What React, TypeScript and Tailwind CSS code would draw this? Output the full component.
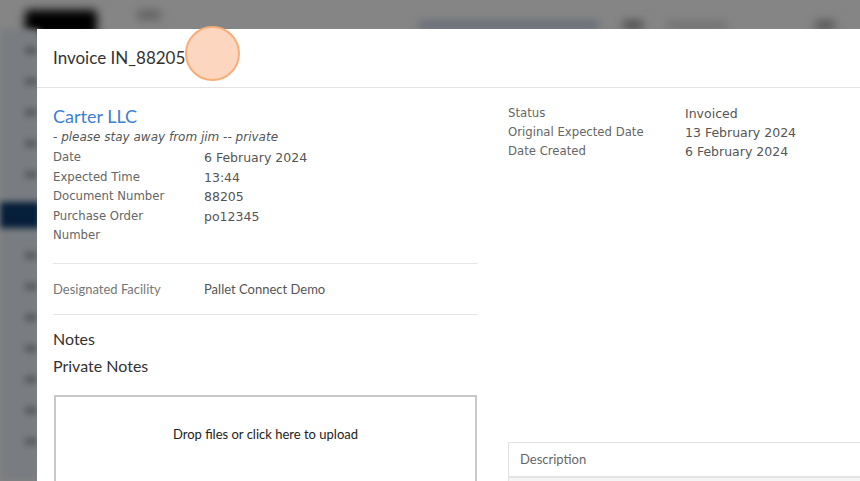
import React from "react";

const leftRows: [string, string][] = [
  ["Date", "6 February 2024"],
  ["Expected Time", "13:44"],
  ["Document Number", "88205"],
  ["Purchase Order Number", "po12345"],
];

const rightRows: [string, string][] = [
  ["Status", "Invoiced"],
  ["Original Expected Date", "13 February 2024"],
  ["Date Created", "6 February 2024"],
];

function Backdrop() {
  return (
    <div className="absolute inset-0 bg-white">
      <div className="flex h-[29px] items-center gap-10 bg-white px-[25px] blur-[5px]">
        <div className="h-[26px] w-[72px] translate-y-[8px] rounded bg-[#000]" />
        <div className="h-[10px] w-[24px] rounded bg-[#bbb]" />
        <div className="ml-auto flex items-center gap-6">
          <div className="h-[6px] w-[180px] translate-y-[10px] bg-[#a8b8d8]" />
          <div className="h-[8px] w-[20px] translate-y-[10px] bg-[#888]" />
          <div className="h-[6px] w-[60px] translate-y-[10px] bg-[#ccc]" />
          <div className="h-[8px] w-[40px] translate-y-[10px] bg-[#fff]" />
          <div className="h-[8px] w-[20px] translate-y-[10px] bg-[#999]" />
        </div>
      </div>
      <div className="flex h-[452px] w-[40px] flex-col gap-[24px] bg-[#e9eef6] pt-[18px] blur-[3px]">
        {[0, 1, 2, 3, 4, 5, 6, 7, 8, 9, 10, 11, 12].map((i) => (
          <div key={i} className={i === 5 ? "h-[26px] bg-[#0b3a6f]" : "ml-[25px] h-[7px] w-[12px] bg-[#a4a9b2]"} />
        ))}
      </div>
    </div>
  );
}

export default function App() {
  return (
    <div className="relative h-[481px] w-[860px] overflow-hidden font-['DejaVu_Sans',sans-serif]">
      <Backdrop />
      <div className="absolute inset-0 bg-black/[0.48]" />

      <div className="absolute left-[37px] top-[29px] h-[470px] w-[840px] bg-white">
        <div className="relative flex h-[59px] items-center border-b border-[#e3e3e3] px-4">
          <h1 className="font-['Lato',sans-serif] text-[17px] text-[#333]">Invoice IN_88205</h1>
          <div className="absolute left-[148px] top-[-3px] h-[55px] w-[55px] rounded-full border-2 border-[#f8ae78] bg-[#fdd6bf]" />
        </div>

        <div className="flex gap-[30px] px-4 pt-[17px]">
          <div className="w-[425px]">
            <div className="font-['Lato',sans-serif] text-[18px] leading-[22px] text-[#3c7fd4]">Carter LLC</div>
            <div className="text-[12px] italic leading-[21px] text-[#555]">- please stay away from jim -- private</div>
            {leftRows.map(([k, v]) => (
              <div key={k} className="grid grid-cols-[151px_1fr] leading-[19.5px]">
                <span className="max-w-[125px] text-[11.7px] text-[#666]">{k}</span>
                <span className="text-[12.5px] text-[#555]">{v}</span>
              </div>
            ))}
            <div className="mt-[17px] border-t border-[#e6e6e6]" />
            <div className="grid grid-cols-[151px_1fr] py-[15px] font-['Lato',sans-serif] text-[13px] leading-[20px]">
              <span className="text-[#777]">Designated Facility</span>
              <span className="text-[#555]">Pallet Connect Demo</span>
            </div>
            <div className="border-t border-[#e6e6e6]" />
            <div className="pt-[10px] font-['Lato',sans-serif] text-[16px] leading-[27px] text-[#333]">
              <div>Notes</div>
              <div>Private Notes</div>
            </div>
            <div className="mx-px mt-[16px] flex h-[120px] justify-center border-2 border-[#c9c9c9] pt-[28px] font-['Lato',sans-serif] text-[13px] text-[#222]">
              Drop files or click here to upload
            </div>
          </div>

          <div className="flex flex-1 flex-col">
            <div className="-mt-[1px]">
              {rightRows.map(([k, v]) => (
                <div key={k} className="grid grid-cols-[177px_1fr] leading-[19px]">
                  <span className="text-[11.7px] text-[#666]">{k}</span>
                  <span className="text-[12.5px] text-[#555]">{v}</span>
                </div>
              ))}
            </div>
            <div className="mt-[281px] border border-[#e2e2e2]">
              <div className="flex h-[33px] items-center px-[11px] font-['Lato',sans-serif] text-[13px] text-[#666]">Description</div>
              <div className="h-[20px] border-t-2 border-[#e4e4e4] bg-[#f5f5f5]" />
            </div>
          </div>
        </div>
      </div>
    </div>
  );
}
